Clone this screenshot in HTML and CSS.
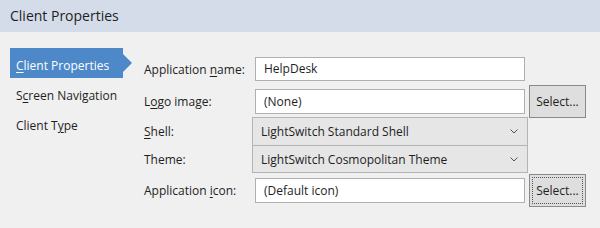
FILE: index.html
```html
<!DOCTYPE html>
<html>
<head>
<meta charset="utf-8">
<link rel="stylesheet" href="styles.css">
</head>
<body>
<div class="header">Client Properties</div>
<div class="content">
  <ul class="nav">
    <li class="nav-item selected"><u>C</u>lient Properties</li>
    <li class="nav-item">S<u>c</u>reen Navigation</li>
    <li class="nav-item">Client T<u>y</u>pe</li>
  </ul>
  <div class="form">
    <div class="row r1">
      <label class="label">Application <u>n</u>ame:</label>
      <div class="input">HelpDesk</div>
    </div>
    <div class="row r2">
      <label class="label">L<u>o</u>go image:</label>
      <div class="input">(None)</div>
      <div class="button">Select...</div>
    </div>
    <div class="row r3">
      <label class="label"><u>S</u>hell:</label>
      <div class="select">LightSwitch Standard Shell
        <svg class="chev" width="8" height="5" viewBox="0 0 8 5"><polyline points="0.5,0.5 4,4 7.5,0.5" fill="none" stroke="#555" stroke-width="1"/></svg>
      </div>
    </div>
    <div class="row r4">
      <label class="label">Theme:</label>
      <div class="select">LightSwitch Cosmopolitan Theme
        <svg class="chev" width="8" height="5" viewBox="0 0 8 5"><polyline points="0.5,0.5 4,4 7.5,0.5" fill="none" stroke="#555" stroke-width="1"/></svg>
      </div>
    </div>
    <div class="row r5">
      <label class="label">Application <u>i</u>con:</label>
      <div class="input">(Default icon)</div>
      <div class="button focused"><span class="focus-ring">Select...</span></div>
    </div>
  </div>
</div>
</body>
</html>
```
FILE: styles.css
```css
* { box-sizing: border-box; }
html, body { margin: 0; padding: 0; }
body {
  width: 600px;
  height: 228px;
  background: #f0f0f0;
  font-family: "Open Sans", "Noto Sans", sans-serif;
  font-size: 12px;
  color: #1e1e1e;
  overflow: hidden;
}
u { text-decoration: underline; text-underline-offset: 2px; text-decoration-thickness: 1px; }
.header {
  height: 32px;
  background: #d5dce9;
  padding-left: 10px;
  font-size: 14px;
  line-height: 32px;
  color: #1e1e1e;
}
.content {
  display: flex;
  padding-top: 16px;
}
.nav {
  list-style: none;
  margin: 0 0 0 10px;
  padding: 0;
  width: 134px;
}
.nav-item {
  height: 30px;
  line-height: 28px;
  padding-top: 4px;
  padding-left: 6px;
  width: 113px;
  position: relative;
  color: #1e1e1e;
}
.nav-item.selected {
  background: #4d88c8;
  color: #fff;
}
.nav-item.selected::after {
  content: "";
  position: absolute;
  right: -9px;
  top: 6px;
  border-left: 9px solid #4d88c8;
  border-top: 9px solid transparent;
  border-bottom: 9px solid transparent;
}
.form {
  display: flex;
  flex-direction: column;
  padding-top: 9px;
}
.row {
  display: flex;
  align-items: center;
}
.r1 { height: 24px; }
.r2 { height: 32px; margin-top: 4px; }
.r3 { height: 29px; }
.r4 { height: 28px; margin-top: -1px; }
.r5 { height: 32px; margin-top: 1px; }
.label {
  width: 111px;
  flex: none;
}
.input {
  width: 270px;
  height: 25px;
  border: 1px solid #b0b0b0;
  background: #fff;
  padding-left: 8px;
  line-height: 23px;
  flex: none;
}
.r1 .input { height: 24px; line-height: 22px; }
.select {
  width: 276px;
  height: 100%;
  margin-left: -3px;
  border: 1px solid #b4b4b4;
  background: #e6e6e6;
  padding-left: 8px;
  display: flex;
  align-items: center;
  justify-content: space-between;
  padding-right: 9px;
  flex: none;
}
.chev { flex: none; }
.button {
  width: 57px;
  height: 33px;
  margin-left: 4px;
  border: 1px solid #8a8a8a;
  background: #dedede;
  display: flex;
  align-items: center;
  justify-content: center;
  flex: none;
}
.focused { padding: 2px; }
.focus-ring {
  width: 100%;
  height: 100%;
  border: 1px dotted #555;
  display: flex;
  align-items: center;
  justify-content: center;
}
```
